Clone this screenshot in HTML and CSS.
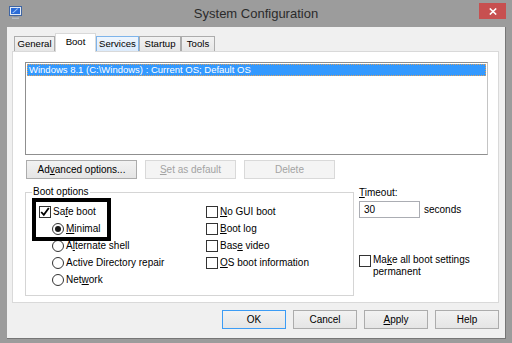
FILE: index.html
```html
<!DOCTYPE html>
<html lang="en">
<head>
<meta charset="utf-8">
<title>System Configuration</title>
<link rel="stylesheet" href="styles.css">
</head>
<body>
<div class="window">
  <header class="titlebar">
    <svg class="app-icon" width="13" height="13" viewBox="0 0 13 13">
      <rect x="0.5" y="0.5" width="12" height="9" fill="#e4ebf5" stroke="#3f65a3"/>
      <rect x="2" y="2" width="9" height="6" fill="#2a6ad6"/>
      <path d="M3 7 L8 2.5 L9.5 2.5 L4.5 7 Z" fill="#9cc2f5"/>
      <rect x="4.5" y="10" width="4" height="1.5" fill="#8c9199"/>
      <rect x="3" y="11.5" width="7" height="1.5" fill="#b6bac0"/>
    </svg>
    <div class="title">System Configuration</div>
    <div class="close">
      <svg width="8" height="7" viewBox="0 0 8 7"><path d="M0.8 0.5 L7.2 6.5 M7.2 0.5 L0.8 6.5" stroke="#fff" stroke-width="1.6"/></svg>
    </div>
  </header>
  <main class="client">
    <nav class="tabs">
      <div class="tab tab-general">General</div>
      <div class="tab tab-boot active">Boot</div>
      <div class="tab tab-services hover">Services</div>
      <div class="tab tab-startup">Startup</div>
      <div class="tab tab-tools">Tools</div>
    </nav>
    <section class="panel">
      <div class="listbox">
        <div class="list-item">Windows 8.1 (C:\Windows) : Current OS; Default OS</div>
      </div>
      <div class="btn-row">
        <div class="btn btn-adv">Ad<span class="ak">v</span>anced options...</div>
        <div class="btn btn-mid disabled"><span class="ak">S</span>et as default</div>
        <div class="btn btn-mid disabled">Delete</div>
      </div>
      <div class="lower">
        <fieldset class="group">
          <legend>Boot options</legend>
          <div class="group-grid">
            <div class="col col-left">
              <div class="highlight"></div>
              <div class="opt"><span class="cb"><svg width="10" height="10" viewBox="0 0 10 10"><path d="M1.2 5 L3.8 7.8 L8.8 1" fill="none" stroke="#000" stroke-width="1.8"/></svg></span><span>Sa<span class="ak">f</span>e boot</span></div>
              <div class="opt sub"><span class="rb on"></span><span><span class="ak">M</span>inimal</span></div>
              <div class="opt sub"><span class="rb"></span><span>A<span class="ak">l</span>ternate shell</span></div>
              <div class="opt sub"><span class="rb"></span><span>Active Directory repair</span></div>
              <div class="opt sub"><span class="rb"></span><span>Net<span class="ak">w</span>ork</span></div>
            </div>
            <div class="col">
              <div class="opt"><span class="cb"></span><span><span class="ak">N</span>o GUI boot</span></div>
              <div class="opt"><span class="cb"></span><span><span class="ak">B</span>oot log</span></div>
              <div class="opt"><span class="cb"></span><span>Bas<span class="ak">e</span> video</span></div>
              <div class="opt"><span class="cb"></span><span><span class="ak">O</span>S boot information</span></div>
            </div>
          </div>
        </fieldset>
        <div class="side">
          <div class="side-label"><span class="ak">T</span>imeout:</div>
          <div class="timeout-row">
            <div class="input">30</div>
            <span>seconds</span>
          </div>
          <div class="permanent">
            <span class="cb"></span>
            <span>Ma<span class="ak">k</span>e all boot settings<br>permanent</span>
          </div>
        </div>
      </div>
    </section>
    <footer class="footer">
      <div class="btn btn-foot default">OK</div>
      <div class="btn btn-foot">Cancel</div>
      <div class="btn btn-foot"><span class="ak">A</span>pply</div>
      <div class="btn btn-foot">Help</div>
    </footer>
  </main>
</div>
</body>
</html>
```
FILE: styles.css
```css
* { box-sizing: border-box; }
html, body { margin: 0; padding: 0; }
body {
  width: 512px;
  height: 343px;
  overflow: hidden;
  font-family: "Liberation Sans", Arial, sans-serif;
  font-size: 10px;
  color: #000;
  background: #9c9c9c;
}
.ak { text-decoration: underline; }

.window {
  width: 512px;
  height: 343px;
  background: #9c9c9c;
  display: flex;
  flex-direction: column;
}
.titlebar {
  height: 27px;
  flex: none;
  display: grid;
  grid-template-columns: 1fr auto 1fr;
  align-items: start;
}
.app-icon { margin: 6px 0 0 9px; }
.title {
  font-size: 13px;
  line-height: 27px;
  color: #2b2b2b;
}
.close {
  justify-self: end;
  margin: 3px 6px 0 0;
  width: 27px;
  height: 16px;
  background: #c75050;
  display: flex;
  align-items: center;
  justify-content: center;
}

.client {
  margin-left: 7px;
  width: 499px;
  height: 312px;
  background: #f0f0f0;
  border-right: 1px solid #767676;
  border-bottom: 1px solid #767676;
  display: flex;
  flex-direction: column;
}

.tabs {
  display: flex;
  align-items: flex-end;
  height: 24px;
  flex: none;
  padding-left: 7px;
}
.tab {
  height: 15px;
  line-height: 14px;
  border: 1px solid #acacac;
  border-bottom: none;
  background: linear-gradient(#f2f2f2, #e6e6e6);
  text-align: center;
  white-space: nowrap;
  font-size: 9.6px;
}
.tab-general { width: 41px; }
.tab-boot { width: 41px; }
.tab-services { width: 43px; }
.tab-startup { width: 42px; }
.tab-tools { width: 34px; }
.tab.active {
  height: 19px;
  line-height: 16px;
  background: #fff;
  border-color: #d9d9d9;
  margin-bottom: -1px;
  position: relative;
  z-index: 1;
}
.tab.hover {
  background: linear-gradient(#eef5fd, #dcebfc);
  border-color: #7eb4ea;
}

.panel {
  margin-left: 5px;
  width: 487px;
  height: 252px;
  flex: none;
  background: #fff;
  border: 1px solid #d9d9d9;
  padding: 10px 11px 0 12px;
}
.listbox {
  width: 463px;
  height: 93px;
  border: 1px solid #8f8f8f;
  border-right-color: #c4c4c4;
  background: #fff;
  padding: 1px;
}
.list-item {
  height: 12px;
  line-height: 12px;
  padding-left: 2px;
  background: #3399ff;
  color: #fff;
  font-size: 9.5px;
  white-space: nowrap;
  outline: 1px dotted #d9a060;
  outline-offset: -1px;
}

.btn-row {
  display: flex;
  gap: 8px;
  margin: 5px 0 0 1px;
}
.btn {
  height: 19px;
  border: 1px solid #acacac;
  background: linear-gradient(#f2f2f2, #e5e5e5);
  line-height: 17px;
  text-align: center;
  white-space: nowrap;
}
.btn-adv { width: 111px; }
.btn-mid { width: 91px; }
.btn.disabled {
  color: #a3a3a3;
  border-color: #d9d9d9;
  background: #f4f4f4;
}
.btn.default { border-color: #3c9cf5; }

.lower {
  display: flex;
  margin-top: 7px;
}
.group {
  margin: 0;
  width: 329px;
  height: 110px;
  border: 1px solid #d5d5d5;
  padding: 5px 6px 7px 13px;
  min-width: 0;
}
.group legend {
  padding: 0 1px;
  margin-left: -7px;
  line-height: 12px;
}
.group-grid {
  display: grid;
  grid-template-columns: 167px 1fr;
}
.col-left { position: relative; }
.highlight {
  position: absolute;
  left: -7px;
  top: -5px;
  width: 79px;
  height: 43px;
  border: 4px solid #000;
  pointer-events: none;
}
.opt {
  height: 17px;
  display: flex;
  align-items: center;
  gap: 2px;
  white-space: nowrap;
}
.opt.sub { padding-left: 13px; }
.cb {
  width: 12px;
  height: 12px;
  flex: none;
  border: 1px solid #333;
  background: #fff;
  display: flex;
  align-items: center;
  justify-content: center;
}
.rb {
  width: 12px;
  height: 12px;
  flex: none;
  border: 1px solid #333;
  border-radius: 50%;
  background: #fff;
  display: flex;
  align-items: center;
  justify-content: center;
}
.rb.on::after {
  content: "";
  width: 6px;
  height: 6px;
  border-radius: 50%;
  background: #1a1a1a;
}

.side {
  margin-left: 5px;
  padding-top: 1px;
  flex: 1;
}
.side-label { line-height: 12px; }
.timeout-row {
  display: flex;
  align-items: center;
  gap: 4px;
  margin-top: 2px;
}
.input {
  width: 61px;
  height: 17px;
  border: 1px solid #abadb3;
  background: #fff;
  padding-left: 4px;
  line-height: 15px;
}
.permanent {
  display: flex;
  align-items: flex-start;
  gap: 2px;
  margin-top: 36px;
  line-height: 12px;
}
.permanent .cb { margin-top: 1px; }

.footer {
  display: flex;
  justify-content: flex-end;
  gap: 7px;
  padding: 7px 6px 0 0;
}
.btn-foot { width: 64px; }
```
